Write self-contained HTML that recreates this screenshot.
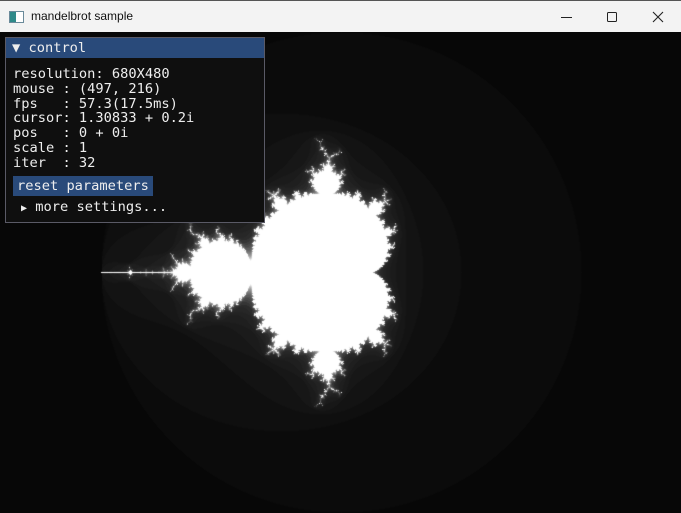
<!DOCTYPE html>
<html><head><meta charset="utf-8"><style>
html,body{margin:0;padding:0;width:681px;height:513px;overflow:hidden;background:#070707}
#tb{position:absolute;left:0;top:0;width:681px;height:32px;background:#f3f3f3;border-top:1px solid #555;box-sizing:border-box}
#tb .t{position:absolute;left:31px;top:8px;font:12px "Liberation Sans",sans-serif;color:#111}
#ic{position:absolute;left:9px;top:10px;width:13px;height:10px;border:1px solid #6a8a9a;background:linear-gradient(90deg,#2f8a8a 0 45%,#fff 45%)}
#cv{position:absolute;left:1px;top:32px}
#panel{position:absolute;left:5px;top:37px;width:258px;height:184px;background:#0f0f0f;border:1px solid #5a5a66;font:13.7px "DejaVu Sans Mono",monospace;color:#eee}
#hd{height:20px;background:#294a7a;line-height:20px;padding-left:6px}
#body{padding:9px 0 0 7px;line-height:14.8px;white-space:pre}
#btn{display:inline-block;background:#294a7a;padding:2px 4px;margin-top:5px;line-height:16px}
#more{margin-top:4px;padding-left:8px}
</style></head><body>
<div id="tb"><div id="ic"></div><div class="t">mandelbrot sample</div>
<svg style="position:absolute;left:0;top:0" width="681" height="32">
<line x1="561" y1="16.5" x2="572" y2="16.5" stroke="#222" stroke-width="1"/>
<rect x="607.5" y="11.5" width="9" height="9" rx="1" fill="none" stroke="#222"/>
<path d="M653 11 L663 21 M663 11 L653 21" stroke="#222" stroke-width="1.1"/>
</svg></div>
<canvas id="cv" width="680" height="481"></canvas>
<div id="panel"><div id="hd">▼ control</div><div id="body">resolution: 680X480
mouse : (497, 216)
fps   : 57.3(17.5ms)
cursor: 1.30833 + 0.2i
pos   : 0 + 0i
scale : 1
iter  : 32
<span id="btn">reset parameters</span>
<div id="more"><span style="font-size:10px">▶</span> more settings...</div></div></div>
<script>
var c=document.getElementById('cv'),x=c.getContext('2d'),W=680,H=481,im=x.createImageData(W,H),d=im.data;
for(var py=0;py<H;py++)for(var px=0;px<W;px++){
var cr=(px-340)/120,ci=(py-240)/120,zr=0,zi=0,n=0;
while(n<32&&zr*zr+zi*zi<=4){var t=zr*zr-zi*zi+cr;zi=2*zr*zi+ci;zr=t;n++;}
var g=(n>=32&&zr*zr+zi*zi<=4)?255:Math.min(255,7+4*(n-1)+(n>10?(n-10)*6:0));
var i=(py*W+px)*4;d[i]=d[i+1]=d[i+2]=g;d[i+3]=255;}
x.putImageData(im,0,0);
</script>
</body></html>
